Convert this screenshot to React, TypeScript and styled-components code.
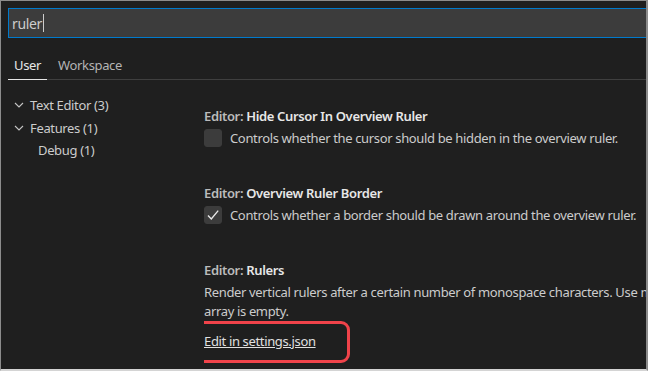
import styled, { createGlobalStyle } from "styled-components";

const GlobalStyle = createGlobalStyle`
  html, body {
    margin: 0;
    padding: 0;
    background: #1f1f1f;
  }
  * {
    box-sizing: border-box;
  }
`;

const Frame = styled.div`
  width: 648px;
  height: 371px;
  overflow: hidden;
  background: #1f1f1f;
  border-top: 1px solid #8c8c8c;
  border-left: 1px solid #8c8c8c;
  border-right: 2px solid #8c8c8c;
  border-bottom: 2px solid #d4d4d4;
  font-family: "Noto Sans", "Open Sans", sans-serif;
  font-size: 13px;
  letter-spacing: -0.35px;
  color: #cccccc;
  display: flex;
  flex-direction: column;
`;

const SearchRow = styled.div`
  padding: 7px 0 0 7px;
`;

const SearchBox = styled.div`
  height: 30px;
  width: 660px;
  background: #3c3c3c;
  border: 1px solid #007acc;
  display: flex;
  align-items: center;
  padding-left: 3px;
  font-size: 14px;
  color: #cccccc;
`;

const Caret = styled.span`
  display: inline-block;
  width: 1px;
  height: 18px;
  background: #cccccc;
  margin-left: 1px;
`;

const TabBar = styled.div`
  display: flex;
  margin: 11px 0 0 7px;
  border-bottom: 1px solid #3f3f3f;
`;

const Tab = styled.div<{ $active?: boolean }>`
  padding: 0 6px;
  height: 31px;
  display: flex;
  align-items: center;
  color: ${({ $active }) => ($active ? "#e7e7e7" : "#b4b4b4")};
  box-shadow: ${({ $active }) => ($active ? "inset 0 -1px 0 #e7e7e7" : "none")};
  margin-bottom: -1px;
  margin-right: 5px;
`;

const Body = styled.div`
  display: grid;
  grid-template-columns: 203px 1fr;
  flex: 1;
  min-height: 0;
`;

const Tree = styled.div`
  padding-top: 14px;
`;

const TreeRow = styled.div<{ $indent: number }>`
  height: 22.5px;
  display: flex;
  align-items: center;
  padding-left: ${({ $indent }) => $indent}px;
  color: #cccccc;
  white-space: nowrap;
`;

const Chevron = styled.svg`
  width: 10px;
  height: 10px;
  margin-right: 6px;
  flex-shrink: 0;
`;

const Content = styled.div`
  padding-top: 27px;
  overflow: hidden;
`;

const Setting = styled.div`
  padding-bottom: 37px;
`;

const Title = styled.div`
  line-height: 18px;
  font-weight: 600;
  color: #e7e7e7;
  white-space: nowrap;
`;

const Category = styled.span`
  color: #bbbbbb;
`;

const CheckRow = styled.div`
  display: flex;
  align-items: center;
  margin-top: 4px;
  gap: 8px;
  white-space: nowrap;
`;

const Checkbox = styled.div`
  width: 18px;
  height: 18px;
  border-radius: 3px;
  background: #3c3c3c;
  border: 1px solid #3c3c3c;
  display: flex;
  align-items: center;
  justify-content: center;
  flex-shrink: 0;
`;

const Description = styled.div`
  margin-top: 4px;
  line-height: 18.5px;
  white-space: nowrap;
`;

const LinkWrap = styled.div`
  position: relative;
  margin-top: 12px;
  display: inline-block;
`;

const EditLink = styled.a`
  color: #e0e0e0;
  text-decoration: underline;
  line-height: 18px;
`;

const Highlight = styled.div`
  position: absolute;
  left: -30px;
  top: -11px;
  width: 176px;
  height: 42px;
  border: 3px solid #f0434a;
  border-radius: 9px;
  pointer-events: none;
`;

const ChevronDown = () => (
  <Chevron viewBox="0 0 10 10">
    <path d="M1 3 L5 7 L9 3" fill="none" stroke="#c5c5c5" strokeWidth="1.1" />
  </Chevron>
);

const CheckMark = () => (
  <svg width="14" height="14" viewBox="0 0 14 14">
    <path d="M2 7.5 L5.3 11 L12.2 2.6" fill="none" stroke="#e8e8e8" strokeWidth="1.4" />
  </svg>
);

const App = () => {
  return (
    <>
      <GlobalStyle />
      <Frame>
        <SearchRow>
          <SearchBox>
            ruler
            <Caret />
          </SearchBox>
        </SearchRow>
        <TabBar>
          <Tab $active>User</Tab>
          <Tab>Workspace</Tab>
        </TabBar>
        <Body>
          <Tree>
            <TreeRow $indent={13}>
              <ChevronDown />
              Text Editor (3)
            </TreeRow>
            <TreeRow $indent={13}>
              <ChevronDown />
              Features (1)
            </TreeRow>
            <TreeRow $indent={37}>Debug (1)</TreeRow>
          </Tree>
          <Content>
            <Setting>
              <Title>
                <Category>Editor: </Category>Hide Cursor In Overview Ruler
              </Title>
              <CheckRow>
                <Checkbox />
                Controls whether the cursor should be hidden in the overview ruler.
              </CheckRow>
            </Setting>
            <Setting>
              <Title>
                <Category>Editor: </Category>Overview Ruler Border
              </Title>
              <CheckRow>
                <Checkbox>
                  <CheckMark />
                </Checkbox>
                Controls whether a border should be drawn around the overview ruler.
              </CheckRow>
            </Setting>
            <Setting>
              <Title>
                <Category>Editor: </Category>Rulers
              </Title>
              <Description>
                Render vertical rulers after a certain number of monospace characters. Use multiple values for
                multiple rulers. No rulers are drawn if
                <br />
                array is empty.
              </Description>
              <LinkWrap>
                <EditLink href="#">Edit in settings.json</EditLink>
                <Highlight />
              </LinkWrap>
            </Setting>
          </Content>
        </Body>
      </Frame>
    </>
  );
};

export default App;
